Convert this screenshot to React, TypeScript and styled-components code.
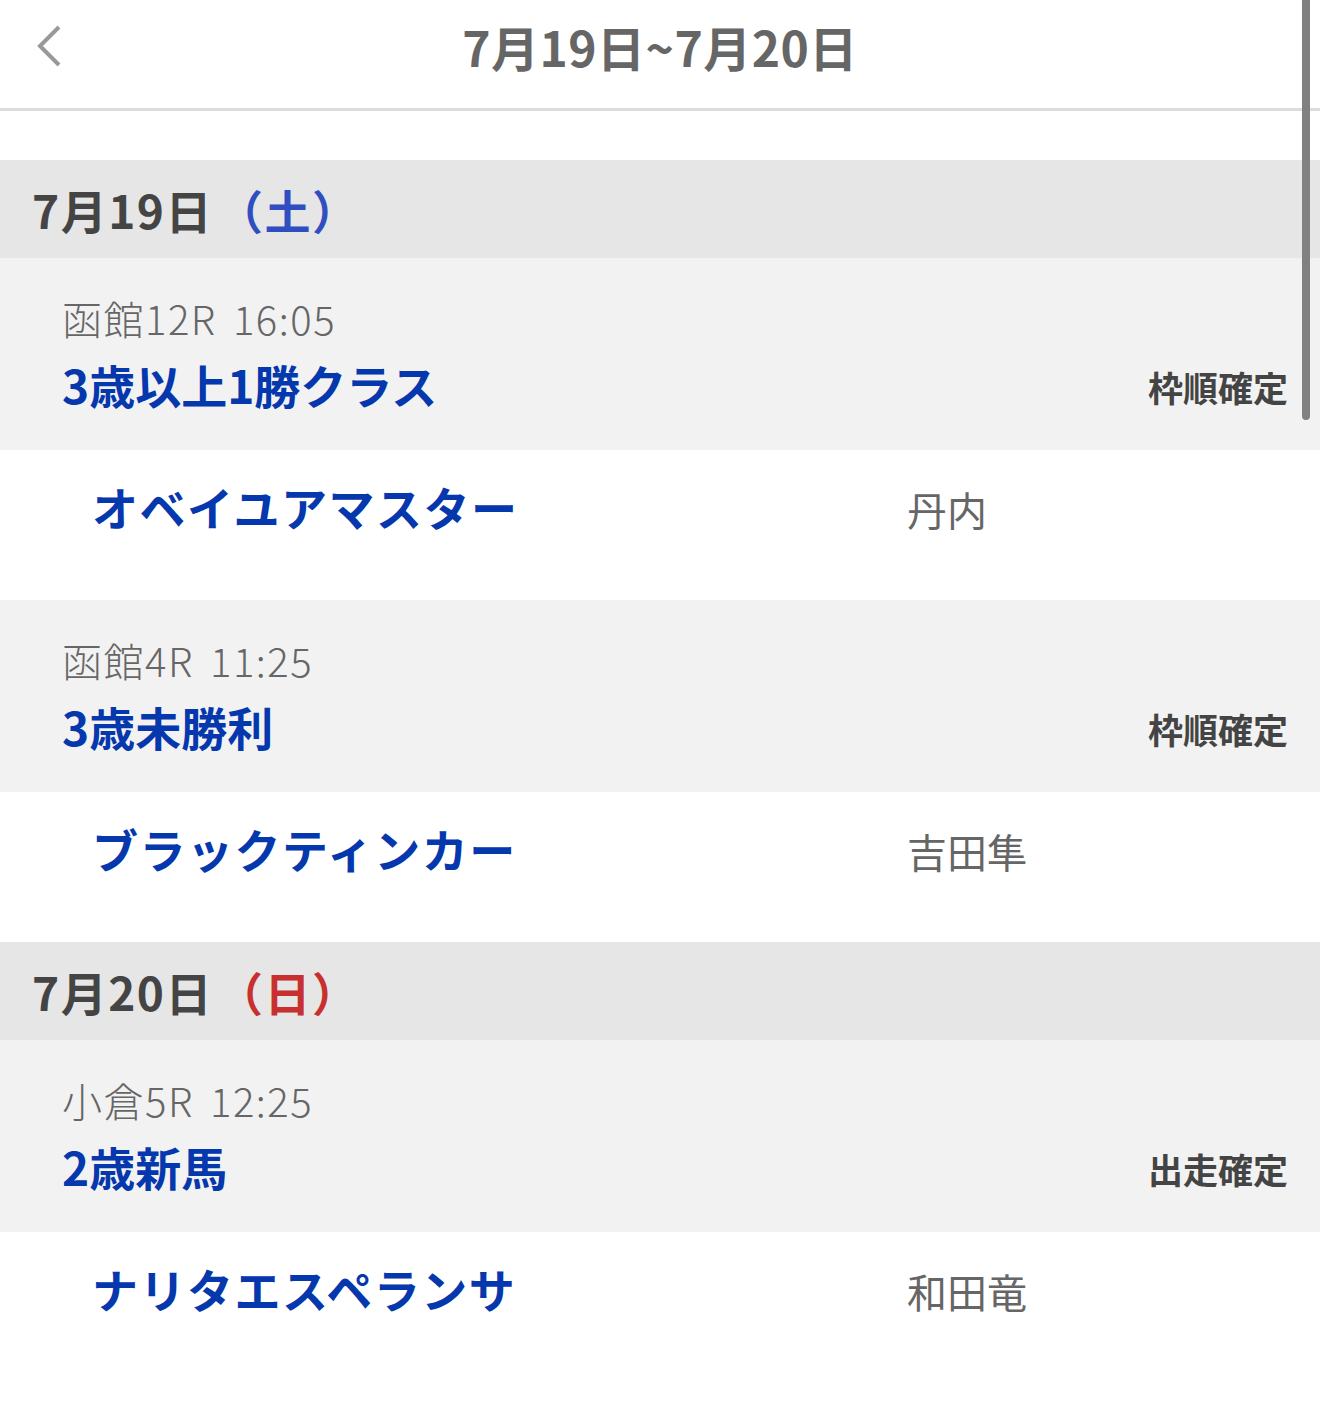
import React from 'react';
import styled, { createGlobalStyle } from 'styled-components';

const GlobalStyle = createGlobalStyle`
  html, body {
    margin: 0;
    padding: 0;
    background: #ffffff;
  }
  body {
    font-family: "Noto Sans CJK JP", "Noto Sans", sans-serif;
  }
`;

const Page = styled.div`
  position: relative;
  width: 1320px;
  min-height: 1417px;
  background: #ffffff;
  overflow: hidden;
`;

const Header = styled.header`
  box-sizing: content-box;
  height: 92px;
  padding-bottom: 16px;
  border-bottom: 3px solid #dcdcdc;
  display: grid;
  grid-template-columns: 120px 1fr 120px;
  align-items: center;
`;

const BackButton = styled.button`
  border: none;
  background: none;
  padding: 0 0 0 34px;
  display: flex;
  align-items: center;
  cursor: pointer;
`;

const Title = styled.h1`
  margin: 0;
  text-align: center;
  font-size: 48px;
  font-weight: 700;
  color: #666666;
  letter-spacing: 0.5px;
`;

const Spacer = styled.div`
  height: 49px;
`;

const DayHeader = styled.div`
  height: 98px;
  background: #e6e6e6;
  display: flex;
  align-items: center;
  padding-left: 32px;
  font-size: 46px;
  font-weight: 700;
  color: #444444;
  letter-spacing: 1.5px;
`;

const Weekday = styled.span<{ $tone: 'sat' | 'sun' }>`
  color: ${(p) => (p.$tone === 'sat' ? '#2f4fc0' : '#c83030')};
  margin-left: 4px;
`;

const RaceHeader = styled.div`
  height: 192px;
  box-sizing: border-box;
  background: #f2f2f2;
  padding: 34px 32px 0 62px;
`;

const Venue = styled.div`
  font-size: 40px;
  font-weight: 300;
  line-height: 52px;
  color: #666666;
  letter-spacing: 1.5px;
  word-spacing: 6px;
`;

const RaceRow = styled.div`
  display: flex;
  justify-content: space-between;
  align-items: center;
  margin-top: 8px;
  height: 64px;
`;

const RaceName = styled.div`
  font-size: 46px;
  font-weight: 700;
  color: #0537ad;
`;

const Status = styled.div`
  font-size: 35px;
  font-weight: 700;
  color: #444444;
  padding-top: 4px;
`;

const HorseRow = styled.div`
  height: 150px;
  box-sizing: border-box;
  padding: 23px 0 0 92px;
  display: grid;
  grid-template-columns: 815px 1fr;
  align-items: center;
  align-content: start;
`;

const HorseName = styled.div`
  font-size: 46px;
  font-weight: 700;
  line-height: 60px;
  color: #0537ad;
  letter-spacing: 1.5px;
`;

const Jockey = styled.div`
  font-size: 40px;
  font-weight: 400;
  line-height: 60px;
  color: #666666;
  padding-top: 6px;
`;

const ScrollThumb = styled.div`
  position: absolute;
  top: 0;
  right: 10px;
  width: 8px;
  height: 420px;
  background: #808080;
  border-radius: 0 0 4px 4px;
`;

interface Race {
  venue: string;
  name: string;
  status: string;
  horse: string;
  jockey: string;
}

interface Day {
  date: string;
  weekday: string;
  tone: 'sat' | 'sun';
  races: Race[];
}

const days: Day[] = [
  {
    date: '7月19日',
    weekday: '（土）',
    tone: 'sat',
    races: [
      {
        venue: '函館12R 16:05',
        name: '3歳以上1勝クラス',
        status: '枠順確定',
        horse: 'オベイユアマスター',
        jockey: '丹内',
      },
      {
        venue: '函館4R 11:25',
        name: '3歳未勝利',
        status: '枠順確定',
        horse: 'ブラックティンカー',
        jockey: '吉田隼',
      },
    ],
  },
  {
    date: '7月20日',
    weekday: '（日）',
    tone: 'sun',
    races: [
      {
        venue: '小倉5R 12:25',
        name: '2歳新馬',
        status: '出走確定',
        horse: 'ナリタエスペランサ',
        jockey: '和田竜',
      },
    ],
  },
];

const App: React.FC = () => {
  return (
    <Page>
      <GlobalStyle />
      <Header>
        <BackButton aria-label="戻る">
          <svg width="30" height="44" viewBox="0 0 30 44">
            <polyline
              points="25,3 6,22 25,41"
              fill="none"
              stroke="#999999"
              strokeWidth="4"
            />
          </svg>
        </BackButton>
        <Title>7月19日~7月20日</Title>
        <div />
      </Header>
      <Spacer />
      {days.map((day) => (
        <section key={day.date}>
          <DayHeader>
            {day.date}
            <Weekday $tone={day.tone}>{day.weekday}</Weekday>
          </DayHeader>
          {day.races.map((race) => (
            <div key={race.venue}>
              <RaceHeader>
                <Venue>{race.venue}</Venue>
                <RaceRow>
                  <RaceName>{race.name}</RaceName>
                  <Status>{race.status}</Status>
                </RaceRow>
              </RaceHeader>
              <HorseRow>
                <HorseName>{race.horse}</HorseName>
                <Jockey>{race.jockey}</Jockey>
              </HorseRow>
            </div>
          ))}
        </section>
      ))}
      <ScrollThumb />
    </Page>
  );
};

export default App;
